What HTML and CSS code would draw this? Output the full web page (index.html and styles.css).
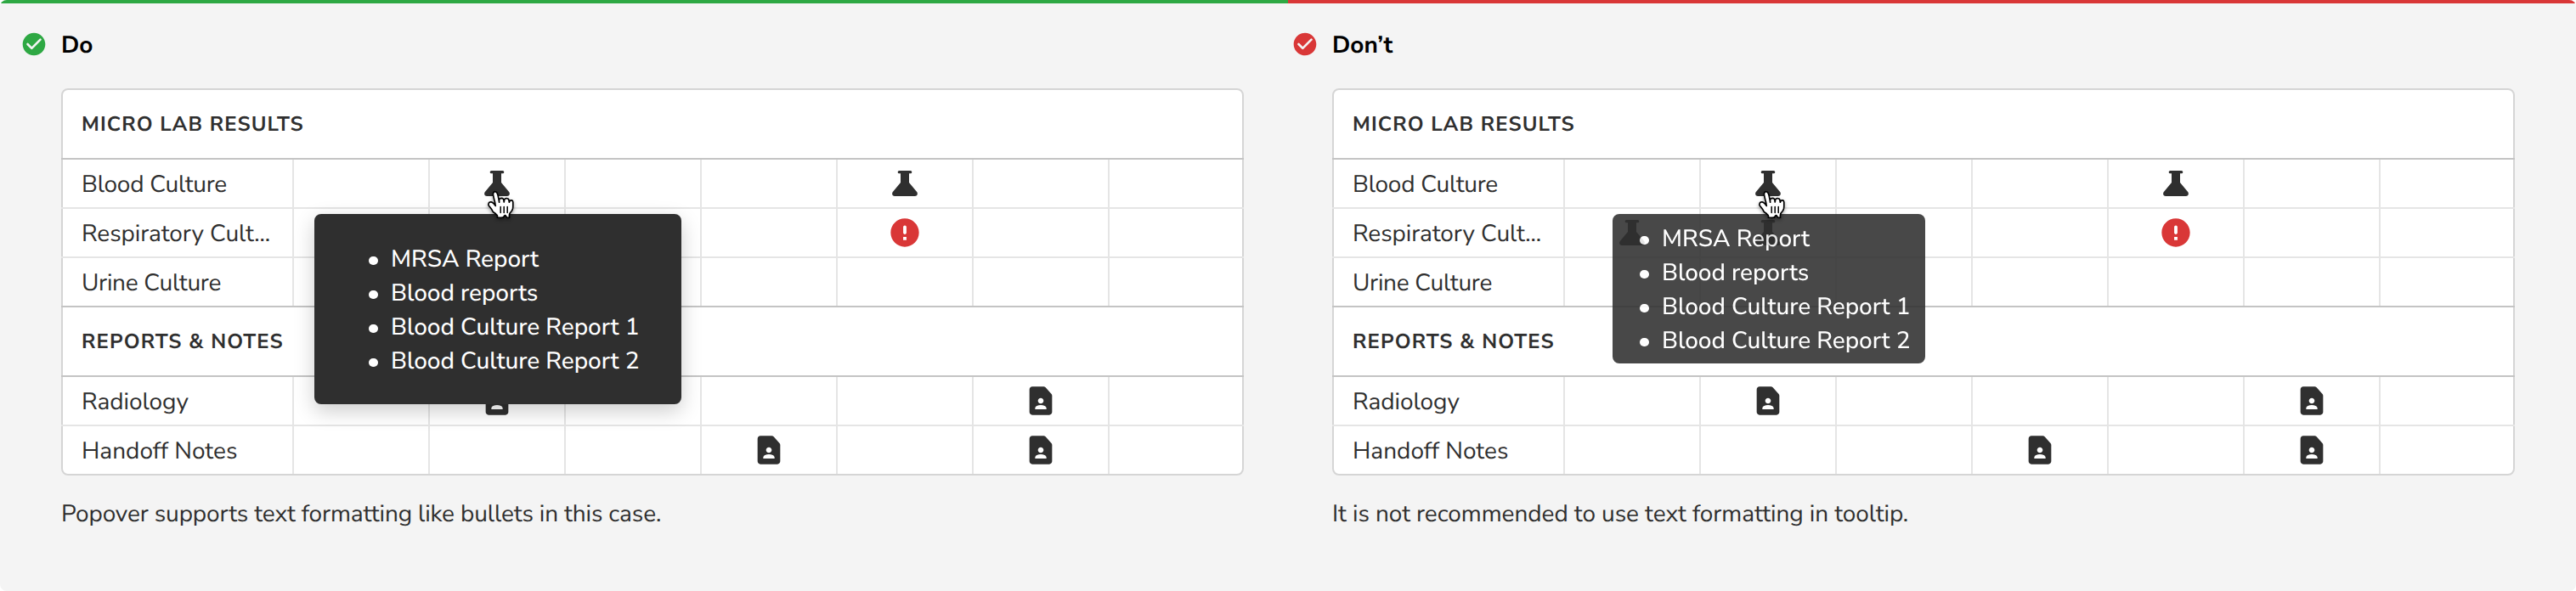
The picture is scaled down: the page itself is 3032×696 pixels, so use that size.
FILE: index.html
```html
<!DOCTYPE html>
<html lang="en">
<head>
<meta charset="utf-8">
<title>Popover and tooltip usage</title>
<link rel="stylesheet" href="styles.css">
</head>
<body>
<svg class="sprite" aria-hidden="true">
  <symbol id="check" viewBox="0 0 24 24"><path d="M12 2C6.48 2 2 6.48 2 12s4.48 10 10 10 10-4.48 10-10S17.52 2 12 2zM9.29 16.29L5.7 12.7a.996.996 0 111.41-1.41L10 14.17l6.88-6.88a.996.996 0 111.41 1.41l-7.59 7.59a.996.996 0 01-1.41 0z"/></symbol>
  <symbol id="flask" viewBox="0 0 24 24"><path d="M8 3h8a1 1 0 010 2h-1v6.4l5.5 6.6c.9 1.3.3 3-1.3 3H4.8c-1.6 0-2.2-1.7-1.3-3L9 11.400V5H8a1 1 0 010-2z"/></symbol>
  <symbol id="alert" viewBox="0 0 24 24"><path d="M12 2C6.480 2 2 6.480 2 12s4.480 10 10 10 10-4.480 10-10S17.520 2 12 2zm0 11.200c-.65 0-1.150-.5-1.150-1.150V8.100c0-.65.5-1.150 1.150-1.150s1.150.5 1.150 1.150v3.950c0 .65-.5 1.150-1.150 1.150zm1.150 4.050h-2.300v-2.250h2.300v2.250z"/></symbol>
  <symbol id="page" viewBox="0 0 24 24"><path d="M14 2H6c-1.100 0-2 .9-2 2v16c0 1.100.9 2 2 2h12c1.100 0 2-.9 2-2V8.400c0-.5-.2-1-.6-1.400l-4-4.400C15 2.200 14.500 2 14 2zm-2 8c1.100 0 2 .9 2 2s-.9 2-2 2-2-.9-2-2 .9-2 2-2zm4 8H8v-.570c0-.810.480-1.530 1.220-1.850.850-.370 1.790-.580 2.780-.580s1.930.210 2.780.580c.740.320 1.220 1.040 1.220 1.850V18z"/></symbol>
  <symbol id="hand" viewBox="0 0 32 32">
    <path fill="#fff" stroke="#000" stroke-width=".85" stroke-linejoin="round" d="M11.300,20.400c-0.300-0.400-0.600-1.100-1.200-2c-0.300-0.500-1.200-1.500-1.500-1.900c-0.200-0.400-0.200-0.600-0.100-1c0.100-0.600,0.700-1.100,1.400-1.100c0.500,0,1,0.400,1.400,0.700c0.200,0.200,0.500,0.600,0.700,0.800c0.200,0.200,0.200,0.300,0.400,0.500c0.200,0.300,0.300,0.500,0.200,0.100c-0.100-0.500-0.200-1.300-0.400-2.100c-0.100-0.600-0.200-0.700-0.300-1.100c-0.100-0.500-0.200-0.800-0.300-1.300c-0.100-0.300-0.200-1.100-0.300-1.500c-0.100-0.500-0.100-1.400,0.300-1.800c0.300-0.300,0.900-0.400,1.300-0.200c0.500,0.300,0.800,1,0.900,1.300c0.200,0.500,0.400,1.200,0.500,2c0.200,1,0.500,2.500,0.500,2.800c0-0.400-0.100-1.100,0-1.500c0.100-0.300,0.300-0.700,0.700-0.800c0.300-0.100,0.600-0.100,0.900-0.100c0.300,0.100,0.600,0.300,0.800,0.500c0.400,0.600,0.400,1.900,0.400,1.800c0.100-0.400,0.100-1.200,0.300-1.600c0.100-0.200,0.500-0.400,0.700-0.500c0.300-0.100,0.700-0.100,1,0c0.200,0,0.600,0.300,0.700,0.500c0.200,0.300,0.300,1.300,0.400,1.700c0,0.100,0.100-0.400,0.300-0.700c0.400-0.600,1.800-0.800,1.900,0.600c0,0.700,0,0.600,0,1.100c0,0.500,0,0.800,0,1.200c0,0.400-0.100,1.300-0.200,1.700c-0.100,0.300-0.400,1-0.700,1.400c0,0-1.100,1.200-1.200,1.800c-0.100,0.600-0.100,0.600-0.100,1c0,0.400,0.100,0.900,0.100,0.900s-0.800,0.100-1.200,0c-0.400-0.100-0.900-0.800-1-1.100c-0.200-0.300-0.500-0.300-0.700,0c-0.200,0.400-0.700,1.100-1.100,1.100c-0.700,0.100-2.100,0-3.100,0c0,0,0.200-1-0.200-1.400c-0.300-0.300-0.800-0.800-1.100-1.100L11.300,20.400z"/>
    <path fill="none" stroke="#000" stroke-width=".75" stroke-linecap="round" d="M19.600,20.700v-3.500M17.600,20.700l0-3.500M15.600,17.300l0,3.400"/>
  </symbol>
</svg>

<main class="guide">
  <section class="panel panel-do">
    <h2 class="title"><svg class="mark"><use href="#check"/></svg><span>Do</span></h2>
    <div class="grid">
      <h3 class="group">MICRO LAB RESULTS</h3>
      <div class="row"><span class="name tight">Blood Culture</span><i></i><i><svg><use href="#flask"/></svg></i><i></i><i></i><i><svg><use href="#flask"/></svg></i><i></i><i></i></div>
      <div class="row"><span class="name">Respiratory Cult...</span><i></i><i></i><i></i><i></i><i><svg class="red"><use href="#alert"/></svg></i><i></i><i></i></div>
      <div class="row end"><span class="name tight">Urine Culture</span><i></i><i></i><i></i><i></i><i></i><i></i><i></i></div>
      <h3 class="group">REPORTS &amp; NOTES</h3>
      <div class="row"><span class="name">Radiology</span><i></i><i><svg><use href="#page"/></svg></i><i></i><i></i><i></i><i><svg><use href="#page"/></svg></i><i></i></div>
      <div class="row last"><span class="name">Handoff Notes</span><i></i><i></i><i></i><i><svg><use href="#page"/></svg></i><i></i><i><svg><use href="#page"/></svg></i><i></i></div>
      <ul class="popover"><li>MRSA Report</li><li>Blood reports</li><li>Blood Culture Report 1</li><li>Blood Culture Report 2</li></ul>
      <svg class="cursor"><use href="#hand"/></svg>
    </div>
    <p class="caption">Popover supports text formatting like bullets in this case.</p>
  </section>

  <section class="panel panel-dont">
    <h2 class="title"><svg class="mark"><use href="#check"/></svg><span>Don’t</span></h2>
    <div class="grid">
      <h3 class="group">MICRO LAB RESULTS</h3>
      <div class="row"><span class="name tight">Blood Culture</span><i></i><i><svg><use href="#flask"/></svg></i><i></i><i></i><i><svg><use href="#flask"/></svg></i><i></i><i></i></div>
      <div class="row"><span class="name">Respiratory Cult...</span><i><svg><use href="#flask"/></svg></i><i><svg><use href="#flask"/></svg></i><i></i><i></i><i><svg class="red"><use href="#alert"/></svg></i><i></i><i></i></div>
      <div class="row end"><span class="name tight">Urine Culture</span><i></i><i></i><i></i><i></i><i></i><i></i><i></i></div>
      <h3 class="group">REPORTS &amp; NOTES</h3>
      <div class="row"><span class="name">Radiology</span><i></i><i><svg><use href="#page"/></svg></i><i></i><i></i><i></i><i><svg><use href="#page"/></svg></i><i></i></div>
      <div class="row last"><span class="name">Handoff Notes</span><i></i><i></i><i></i><i><svg><use href="#page"/></svg></i><i></i><i><svg><use href="#page"/></svg></i><i></i></div>
      <ul class="tooltip"><li>MRSA Report</li><li>Blood reports</li><li>Blood Culture Report 1</li><li>Blood Culture Report 2</li></ul>
      <svg class="cursor"><use href="#hand"/></svg>
    </div>
    <p class="caption">It is not recommended to use text formatting in tooltip.</p>
  </section>
</main>
</body>
</html>
```
FILE: styles.css
```css
* { box-sizing: border-box; margin: 0; padding: 0; }
body {
  background: #fff;
  color: #2f2f2f;
  font: 400 28px/40px "Nunito Sans", Nunito, Lato, sans-serif;
  text-rendering: geometricPrecision;
}
.sprite { position: absolute; width: 0; height: 0; }
.guide {
  display: flex;
  width: 3032px;
  height: 696px;
  border-radius: 8px;
  overflow: hidden;
  background: #f4f4f4;
}
.panel { width: 1516px; border-top: 4px solid; }
.panel-do { border-color: #2ea843; padding: 28px 52px 0 24px; }
.panel-dont { border-color: #d93737; padding: 28px 72px 0 4px; }
.title {
  display: flex;
  align-items: center;
  gap: 16px;
  height: 40px;
  font-size: 28px;
  font-weight: 700;
  color: #000;
}
.title span { padding-top: 2px; }
.mark { width: 32px; height: 32px; }
.panel-do .mark { fill: #2ea843; }
.panel-dont .mark { fill: #d93737; }
.grid {
  position: relative;
  width: 1392px;
  height: 456px;
  margin: 32px 0 0 48px;
  background: #fff;
  border: 2px solid #d5d5d5;
  border-radius: 8px;
}
.group {
  height: 82px;
  margin: 0 -2px;
  padding: 1px 0 0 24px;
  border-bottom: 2px solid #c4c4c4;
  font-size: 24px;
  font-weight: 700;
  line-height: 80px;
  letter-spacing: 1.120px;
}
.row {
  display: grid;
  grid-template-columns: 272px repeat(6, 160px) 160px;
  height: 58px;
  margin: 0 -2px;
  border-bottom: 2px solid #e5e5e5;
}
.row.end { border-bottom-color: #c4c4c4; }
.row.last { height: 56px; border-bottom: 0; }
.name { padding: 1px 0 0 24px; line-height: 56px; letter-spacing: -.08px; white-space: nowrap; height: 56px; }
.name.tight { letter-spacing: -.26px; }
.row.last .name { letter-spacing: 0; }
.row i {
  display: flex;
  align-items: center;
  justify-content: center;
  height: 56px;
  border-left: 2px solid #e5e5e5;
}
.row svg { width: 40px; height: 40px; fill: #2f2f2f; }
.row svg.red { fill: #d93737; }
.caption { margin: 25px 0 0 48px; letter-spacing: -.12px; white-space: nowrap; }
.panel-dont .caption { letter-spacing: -.06px; }
.popover, .tooltip {
  position: absolute;
  top: 146px;
  border-radius: 8px;
  background: #2f2f2f;
  color: #fff;
  font-weight: 500;
  letter-spacing: -.05px;
  list-style: none;
  white-space: nowrap;
}
.popover {
  left: 296px;
  width: 432px;
  height: 224px;
  padding: 33px 0 0 90px;
  box-shadow: 0 8px 24px rgba(0, 0, 0, .2);
}
.tooltip {
  left: 328px;
  width: 368px;
  height: 176px;
  padding: 9px 0 0 58px;
  opacity: .88;
}
.popover li, .tooltip li { position: relative; }
.popover li::before, .tooltip li::before {
  content: "";
  position: absolute;
  left: -26px;
  top: 16.500px;
  width: 10.500px;
  height: 10.500px;
  border-radius: 50%;
  background: #fff;
}
.cursor {
  position: absolute;
  left: 483.500px;
  top: 102.500px;
  width: 64px;
  height: 64px;
  filter: drop-shadow(0 2px 2px rgba(0, 0, 0, .4));
}
```
